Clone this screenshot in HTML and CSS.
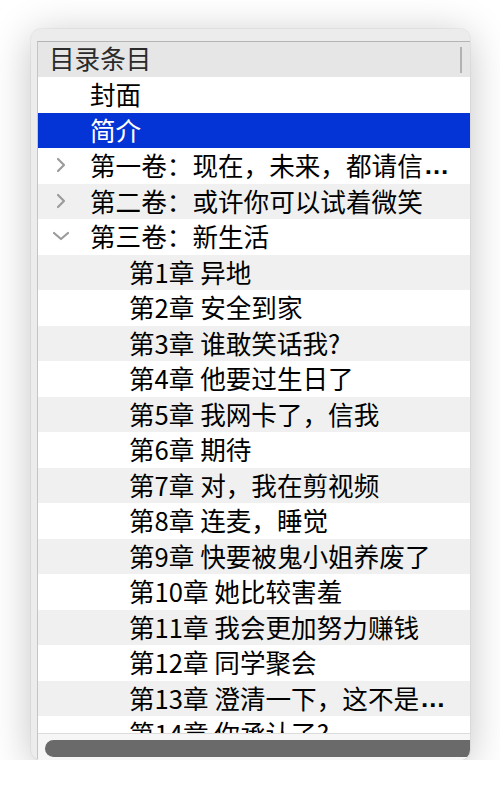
FILE: index.html
```html
<!DOCTYPE html>
<html lang="zh-CN">
<head>
  <meta charset="UTF-8" />
  <meta name="viewport" content="width=device-width, initial-scale=1.0">
  <title>目录条目</title>
  <link rel="stylesheet" href="styles.css">
</head>
<body>
  <div class="window">
    <div class="outline">
      <div class="header">
        <span>目录条目</span>
        <span class="divider"></span>
      </div>

      <div class="rows">
        <div class="row"><span class="twisty"></span>封面</div>
        <div class="row selected"><span class="twisty"></span>简介</div>
        <div class="row">
          <span class="twisty"><svg viewBox="0 0 16 16"><polyline points="5,2 11,8 5,14" /></svg></span>第一卷：现在，未来，都请信<span class="ellipsis">…</span>
        </div>
        <div class="row">
          <span class="twisty"><svg viewBox="0 0 16 16"><polyline points="5,2 11,8 5,14" /></svg></span>第二卷：或许你可以试着微笑
        </div>
        <div class="row">
          <span class="twisty"><svg viewBox="0 0 16 16"><polyline points="1,5 8,11 15,5" /></svg></span>第三卷：新生活
        </div>
        <div class="row child">第1章 异地</div>
        <div class="row child">第2章 安全到家</div>
        <div class="row child">第3章 谁敢笑话我?</div>
        <div class="row child">第4章 他要过生日了</div>
        <div class="row child">第5章 我网卡了，信我</div>
        <div class="row child">第6章 期待</div>
        <div class="row child">第7章 对，我在剪视频</div>
        <div class="row child">第8章 连麦，睡觉</div>
        <div class="row child">第9章 快要被鬼小姐养废了</div>
        <div class="row child">第10章 她比较害羞</div>
        <div class="row child">第11章 我会更加努力赚钱</div>
        <div class="row child">第12章 同学聚会</div>
        <div class="row child">第13章 澄清一下，这不是<span class="ellipsis">…</span></div>
        <div class="row child">第14章 你承认了?</div>
      </div>

      <div class="hscroll">
        <div class="thumb"></div>
      </div>
    </div>
  </div>
</body>
</html>
```

FILE: styles.css
```css
body {
  margin: 0;
  background-color: #ffffff;
  font-family: "Noto Sans CJK SC", "Noto Sans", sans-serif;
}
.window {
  box-sizing: border-box;
  width: 439px;
  height: 731px;
  margin: 29px 0 0 31px;
  padding: 12px 0 0 6px;
  background-color: #ececec;
  border-radius: 10px;
  overflow: hidden;
  box-shadow: 0 6px 40px rgba(0,0,0,0.24), 0 0 0 1px rgba(0,0,0,0.04);
}
.outline {
  height: 100%;
  display: flex;
  flex-direction: column;
  background-color: #ffffff;
  border-top: 1px solid #b4b4b4;
  border-left: 1px solid #c4c4c4;
}
.header {
  flex: 0 0 35px;
  box-sizing: border-box;
  display: flex;
  align-items: center;
  justify-content: space-between;
  padding: 0 0 4px 11px;
  background-color: #e6e6e6;
  color: #2b2b2b;
  font-size: 25.6px;
  line-height: 31px;
}
.divider {
  width: 2px;
  height: 26px;
  margin: 4px 8px 0 0;
  background-color: #b2b2b2;
}
.rows {
  flex: 1;
  overflow: hidden;
}
.row {
  box-sizing: border-box;
  display: flex;
  align-items: center;
  height: 35.5px;
  padding-bottom: 1px;
  font-size: 25.6px;
  line-height: 34px;
  color: #000000;
  white-space: nowrap;
}
.row:nth-child(even) {
  background-color: #eff0ef;
}
.row.selected {
  background-color: #0433d6;
  color: #ffffff;
}
.row.child {
  padding-left: 91px;
}
.ellipsis {
  font-family: "Liberation Sans", sans-serif;
  font-weight: 700;
  margin-left: 1px;
}
.twisty {
  flex: 0 0 16px;
  height: 16px;
  margin: 0 21px 0 15px;
}
.twisty svg {
  display: block;
  width: 16px;
  height: 16px;
  fill: none;
  stroke: #9b9b9b;
  stroke-width: 2.2;
  stroke-linecap: round;
  stroke-linejoin: round;
}
.hscroll {
  flex: 0 0 28px;
  box-sizing: border-box;
  padding: 6px 0 0 7px;
  background-color: #f6f6f6;
  border-top: 1px solid #dcdcdc;
}
.thumb {
  height: 17px;
  border-radius: 9px 0 0 9px;
  background-color: #6a6a6a;
}
```
